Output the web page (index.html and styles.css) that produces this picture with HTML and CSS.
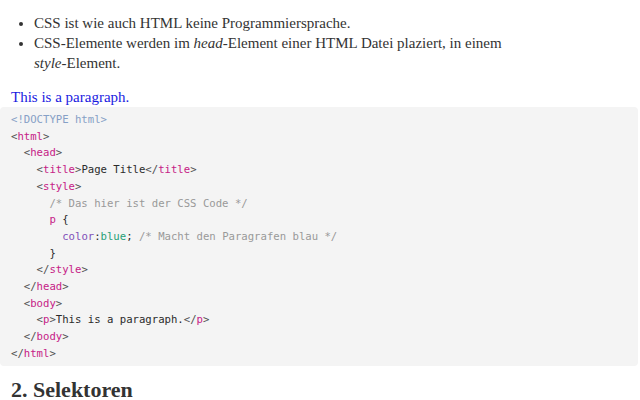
FILE: index.html
```
<!DOCTYPE html>
<html lang="de">
<head>
<meta charset="utf-8">
<link rel="stylesheet" href="styles.css">
</head>
<body>
<div class="page">
  <ul class="list">
    <li>CSS ist wie auch HTML keine Programmiersprache.</li>
    <li>CSS-Elemente werden im <em>head</em>-Element einer HTML Datei plaziert, in einem <em>style</em>-Element.</li>
  </ul>
  <p class="demo">This is a paragraph.</p>
  <pre class="code"><span class="dt">&lt;!DOCTYPE html&gt;</span>
<span class="p">&lt;</span><span class="t">html</span><span class="p">&gt;</span>
  <span class="p">&lt;</span><span class="t">head</span><span class="p">&gt;</span>
    <span class="p">&lt;</span><span class="t">title</span><span class="p">&gt;</span>Page Title<span class="p">&lt;/</span><span class="t">title</span><span class="p">&gt;</span>
    <span class="p">&lt;</span><span class="t">style</span><span class="p">&gt;</span>
      <span class="c">/* Das hier ist der CSS Code */</span>
      <span class="t">p</span> {
        <span class="pr">color</span>:<span class="v">blue</span>; <span class="c">/* Macht den Paragrafen blau */</span>
      }
    <span class="p">&lt;/</span><span class="t">style</span><span class="p">&gt;</span>
  <span class="p">&lt;/</span><span class="t">head</span><span class="p">&gt;</span>
  <span class="p">&lt;</span><span class="t">body</span><span class="p">&gt;</span>
    <span class="p">&lt;</span><span class="t">p</span><span class="p">&gt;</span>This is a paragraph.<span class="p">&lt;/</span><span class="t">p</span><span class="p">&gt;</span>
  <span class="p">&lt;/</span><span class="t">body</span><span class="p">&gt;</span>
<span class="p">&lt;/</span><span class="t">html</span><span class="p">&gt;</span></pre>
  <h2 class="heading">2. Selektoren</h2>
</div>
</body>
</html>
```
FILE: styles.css
```
html, body {
  margin: 0;
  padding: 0;
  background: #ffffff;
}
.page {
  font-family: "Liberation Serif", "DejaVu Serif", serif;
  font-size: 15px;
  color: #333333;
}
.list {
  margin: 13px 0 0 0;
  padding: 0 0 0 34px;
  line-height: 20px;
  width: 475px;
}
.list li {
  padding-left: 0;
}
.demo {
  margin: 14px 0 0 0;
  padding-left: 11px;
  line-height: 20px;
  color: #1a1adf;
}
.code {
  margin: 0 2px 0 0;
  padding: 5px 11px 3px 11px;
  background: #f4f4f4;
  border-radius: 4px;
  font-family: "DejaVu Sans Mono", "Liberation Mono", monospace;
  font-size: 10.63px;
  line-height: 16.7px;
  color: #2b2b2b;
}
.dt { color: #86a0c6; }
.p { color: #505050; }
.t { color: #c62186; }
.c { color: #999999; }
.pr { color: #8050b8; }
.v { color: #27a077; }
.heading {
  margin: 10px 0 0 0;
  padding-left: 11px;
  font-size: 22px;
  line-height: 28px;
  font-weight: bold;
  color: #333333;
}
```
